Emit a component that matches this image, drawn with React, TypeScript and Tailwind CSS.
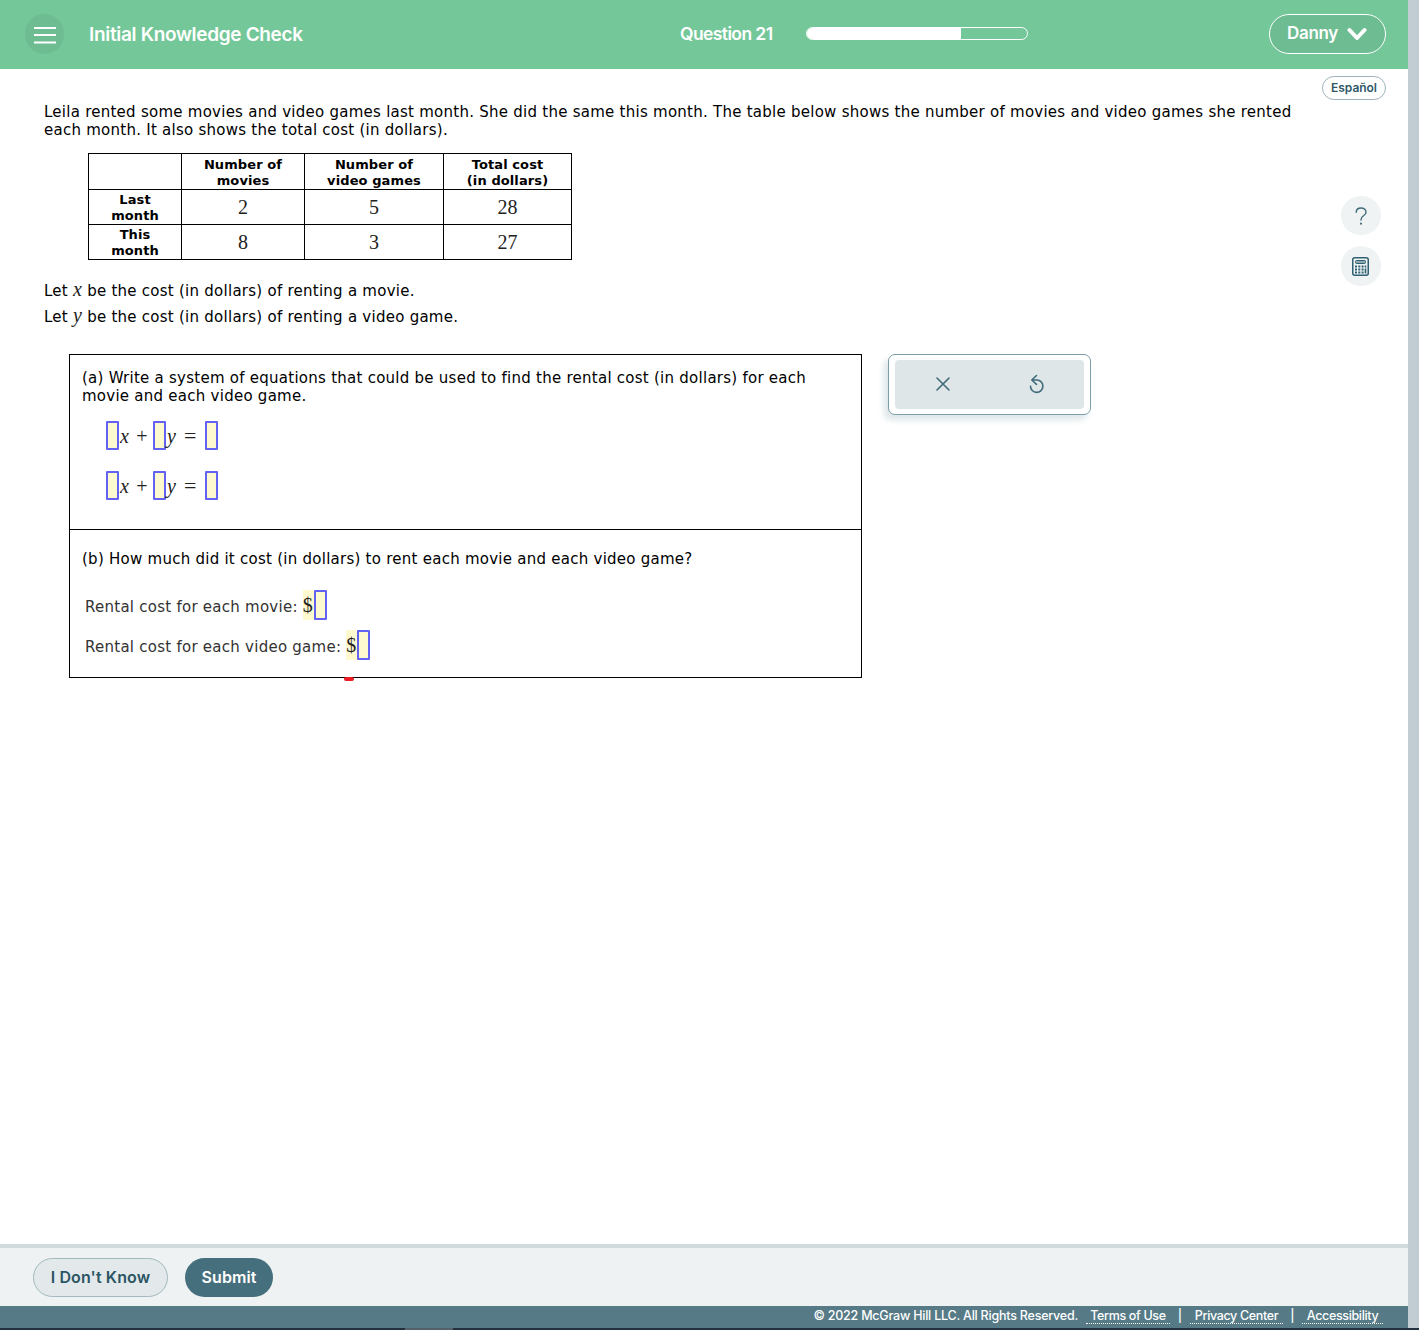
/*
 * Knowledge check question screen: green header, question body with the
 * answer box and side tools, then the submit bar and legal footer.
 */
const BODY = "font-['Verdana','DejaVu_Sans',sans-serif] text-[15px] leading-[18px] tracking-[0.255px]";
const UI = "font-['Inter',sans-serif]";
const MATH = "font-['Liberation_Serif',serif] text-[20px] text-[#222]";

const HEADERS = [
  ["Number of", "movies"],
  ["Number of", "video games"],
  ["Total cost", "(in dollars)"],
];

const ROWS = [
  { label: ["Last", "month"], values: ["2", "5", "28"] },
  { label: ["This", "month"], values: ["8", "3", "27"] },
];

const CELL = "flex flex-col items-center justify-center border-r border-b border-black text-center";
const TH = "font-['Verdana','DejaVu_Sans',sans-serif] text-[13px] font-bold leading-[16px] tracking-[0.1px] whitespace-nowrap text-black";

function Header() {
  return (
    <header className={`flex h-[69px] shrink-0 items-center bg-[#74c799] pb-[1px] pl-[25px] pr-[22px] text-white ${UI}`}>
      <button className="flex h-10 w-[39px] items-center justify-center rounded-full bg-[#6ebd92] pt-[1px]">
        <svg width="22" height="18" viewBox="0 0 22 18" stroke="white" strokeWidth="2">
          <path d="M0 2h22M0 9h22M0 16.500h22" />
        </svg>
      </button>
      <h1 className="ml-[25px] w-[591px] whitespace-nowrap pt-[2px] text-[19px] font-semibold tracking-[-0.32px]">Initial Knowledge Check</h1>
      <span className="w-[126px] whitespace-nowrap pt-[1px] text-[17.5px] font-semibold tracking-[-0.6px]">Question 21</span>
      <div className="mb-[1px] h-[13px] w-[222px] overflow-hidden rounded-full border border-white">
        <div className="h-full w-[154px] bg-white" />
      </div>
      <button className="ml-auto flex h-10 w-[117px] items-center rounded-full border border-white bg-[#6ebd92] pl-[17px]">
        <span className="w-[60px] text-left text-[17px] font-semibold tracking-[-0.3px]">Danny</span>
        <svg width="20" height="14" viewBox="0 0 20 14" fill="none" stroke="white" strokeWidth="4" strokeLinecap="round" strokeLinejoin="round">
          <path d="M2.500 3l7.500 8 7.500-8" />
        </svg>
      </button>
    </header>
  );
}

function CostTable() {
  return (
    <div className="ml-11 mt-[14px] grid w-[484px] grid-cols-[93px_123px_139px_128px] grid-rows-[36px_35px_35px] border-t border-l border-black">
      <div className={CELL} />
      {HEADERS.map(([a, b]) => (
        <div key={b} className={`${CELL} ${TH} pt-[2px]`}>
          <span>{a}</span>
          <span>{b}</span>
        </div>
      ))}
      {ROWS.map((row) => [
        <div key={row.label[0]} className={`${CELL} ${TH} pt-[2px]`}>
          <span>{row.label[0]}</span>
          <span>{row.label[1]}</span>
        </div>,
        ...row.values.map((v) => (
          <div key={v} className={`${CELL} ${MATH}`}>{v}</div>
        )),
      ])}
    </div>
  );
}

function Blank() {
  return <span className="block h-full w-[13px] shrink-0 rounded-[1px] border-2 border-[#6262f3] bg-[#fff9d0]" />;
}

function Equation() {
  return (
    <div className={`flex items-center leading-none ${MATH}`}>
      <div className="h-[29px]"><Blank /></div>
      <i className="w-[12px] pl-[1px] pt-[1px] text-[20px]">x</i>
      <span className="w-[22px] text-center">+</span>
      <div className="h-[29px]"><Blank /></div>
      <i className="w-[15px] pl-[1px] pt-[1px] text-[20px]">y</i>
      <span className="w-[24px] pl-[3px] text-[22px]">=</span>
      <div className="h-[29px]"><Blank /></div>
    </div>
  );
}

function CostAnswer({ label }: { label: string }) {
  return (
    <div className="flex h-[30px] items-center">
      <span className={`whitespace-pre pt-[3px] ${BODY} text-[#333]`}>{label}</span>
      <span className={`ml-[5px] flex h-full w-[11px] items-center bg-[#fff9d0] leading-none ${MATH}`}>$</span>
      <Blank />
    </div>
  );
}

function AnswerBox() {
  return (
    <div className="relative h-[324px] w-[793px] border border-black">
      <div className="h-[175px] border-b border-black pl-3 pt-[14px]">
        <p className={`whitespace-nowrap ${BODY}`}>
          (a) Write a system of equations that could be used to find the rental cost (in dollars) for each
          <br />
          movie and each video game.
        </p>
        <div className="ml-6 mt-4 flex flex-col gap-[21px]">
          <Equation />
          <Equation />
        </div>
      </div>
      <div className="pl-3 pt-5">
        <p className={`whitespace-nowrap ${BODY}`}>(b) How much did it cost (in dollars) to rent each movie and each video game?</p>
        <div className="ml-[3px] mt-[22px] flex flex-col gap-[10px]">
          <CostAnswer label="Rental cost for each movie:" />
          <CostAnswer label="Rental cost for each video game:" />
        </div>
      </div>
      <span className="absolute left-[274px] top-[322px] h-[4px] w-[10px] rounded-[2px] bg-[#ed1c24]" />
    </div>
  );
}

function Toolbox() {
  return (
    <div className="ml-[26px] h-[61px] w-[203px] rounded-[7px] border border-[#7c9ea8] bg-white p-[5px] shadow-[-4px_5px_6px_0px_#dde6e9]">
      <div className="ml-[1px] flex h-[49px] w-[189px] items-center justify-around rounded-[4px] bg-[#dfe6e8] pb-[1px] pl-[1px]">
        <svg width="14" height="14" viewBox="0 0 14 14" stroke="#3f6b7a" strokeWidth="1.6" strokeLinecap="round">
          <path d="M1 1l12 12M13 1L1 13" />
        </svg>
        <svg width="16" height="20" viewBox="0 0 16 20" fill="none" stroke="#3f6b7a" strokeWidth="1.6" strokeLinecap="round" strokeLinejoin="round">
          <path d="M7.500 1.500L2.800 6l4.700 4.300M3 6h5.500a6.200 6.200 0 1 1-7 6.200" />
        </svg>
      </div>
    </div>
  );
}

function SideTools() {
  return (
    <aside className="w-[86px] pt-[7px]">
      <button className={`block h-6 w-16 rounded-full border border-[#9db3ba] text-[12px] font-semibold leading-[22px] tracking-[-0.05px] text-[#2f5866] ${UI}`}>Español</button>
      <button className="ml-[19px] mt-24 flex h-[39px] w-10 items-center justify-center rounded-full bg-[#eff3f4] pr-[1px]">
        <svg width="12" height="18" viewBox="0 0 12 18" fill="none" stroke="#3f6b7a" strokeWidth="1.4" strokeLinecap="round">
          <path d="M1.200 5.200C1.200 2.600 3.300 1 6 1s5 1.600 5 4.200c0 3.800-5 3.400-5 7.300v.5" />
          <path d="M6 16.600v.1" strokeWidth="2" />
        </svg>
      </button>
      <button className="ml-[19px] mt-[11px] flex h-10 w-10 items-center justify-center rounded-full bg-[#eff3f4] pr-[1px]">
        <svg width="17" height="19" viewBox="0 0 17 19" fill="none" stroke="#2f6172">
          <rect x=".75" y=".75" width="15.500" height="17.500" rx="2" strokeWidth="1.500" />
          <rect x="3.500" y="3.500" width="10" height="3" rx="1" fill="#8fa9b2" />
          <path d="M3 9.500h9M3 12.500h9M3 15.500h9" strokeWidth="2" strokeDasharray="2 1.300" />
          <path d="M13.500 8.500v2M13.500 11.500v5" strokeWidth="1.600" />
        </svg>
      </button>
    </aside>
  );
}

const LINK = "h-[18px] border-b border-dotted border-white text-center leading-[19px] tracking-[-0.35px]";

function Footer() {
  return (
    <footer className={`shrink-0 ${UI}`}>
      <div className="flex h-[62px] items-start gap-[17px] border-t-4 border-[#d1dbde] bg-[#eef2f3] pl-[33px] pt-[10px]">
        <button className="h-[39px] w-[135px] rounded-full border border-[#a3b8bf] bg-[#e3e9eb] pb-[2px] text-[16px] font-semibold tracking-[0.1px] text-[#2b5564]">I Don't Know</button>
        <button className="h-[39px] w-[88px] rounded-full bg-[#466f7d] pb-[2px] text-[16px] font-semibold tracking-[0.1px] text-white">Submit</button>
      </div>
      <div className="flex h-[22px] justify-end whitespace-nowrap bg-[#567b86] pr-[25px] text-[12.5px] font-medium text-white">
        <span className="mr-2 leading-5 tracking-[-0.22px]">© 2022 McGraw Hill LLC. All Rights Reserved.</span>
        <span className={`w-[84px] ${LINK}`}>Terms of Use</span>
        <span className="w-5 text-center leading-[19px]">|</span>
        <span className={`w-[93px] ${LINK}`}>Privacy Center</span>
        <span className="w-[19px] text-center leading-[19px]">|</span>
        <span className={`w-[81px] ${LINK}`}>Accessibility</span>
      </div>
    </footer>
  );
}

export default function App() {
  return (
    <div className="flex h-[1330px] w-[1419px] flex-col overflow-hidden bg-white">
      <div className="flex flex-1">
        <div className="flex w-[1408px] flex-col">
          <Header />
          <main className="flex flex-1">
            <div className="w-[1322px] pl-11 pt-[34px]">
              <p className={`whitespace-nowrap ${BODY}`}>
                Leila rented some movies and video games last month. She did the same this month. The table below shows the number of movies and video games she rented
                <br />
                each month. It also shows the total cost (in dollars).
              </p>
              <CostTable />
              <div className="mt-[18px]">
                <p className={`${BODY} h-[26px] leading-[26px]`}>
                  Let <i className={`${MATH} leading-none`}>x</i> be the cost (in dollars) of renting a movie.
                </p>
                <p className={`${BODY} h-[26px] leading-[26px]`}>
                  Let <i className={`${MATH} leading-none`}>y</i> be the cost (in dollars) of renting a video game.
                </p>
              </div>
              <div className="ml-[25px] mt-6 flex items-start">
                <AnswerBox />
                <Toolbox />
              </div>
            </div>
            <SideTools />
          </main>
          <Footer />
        </div>
        <div className="w-[11px] bg-[#c1cdd3]" />
      </div>
      <div className="flex h-[2px] shrink-0 bg-[#22303f]">
        <div className="ml-[405px] w-12 bg-[#56606a]" />
      </div>
    </div>
  );
}
